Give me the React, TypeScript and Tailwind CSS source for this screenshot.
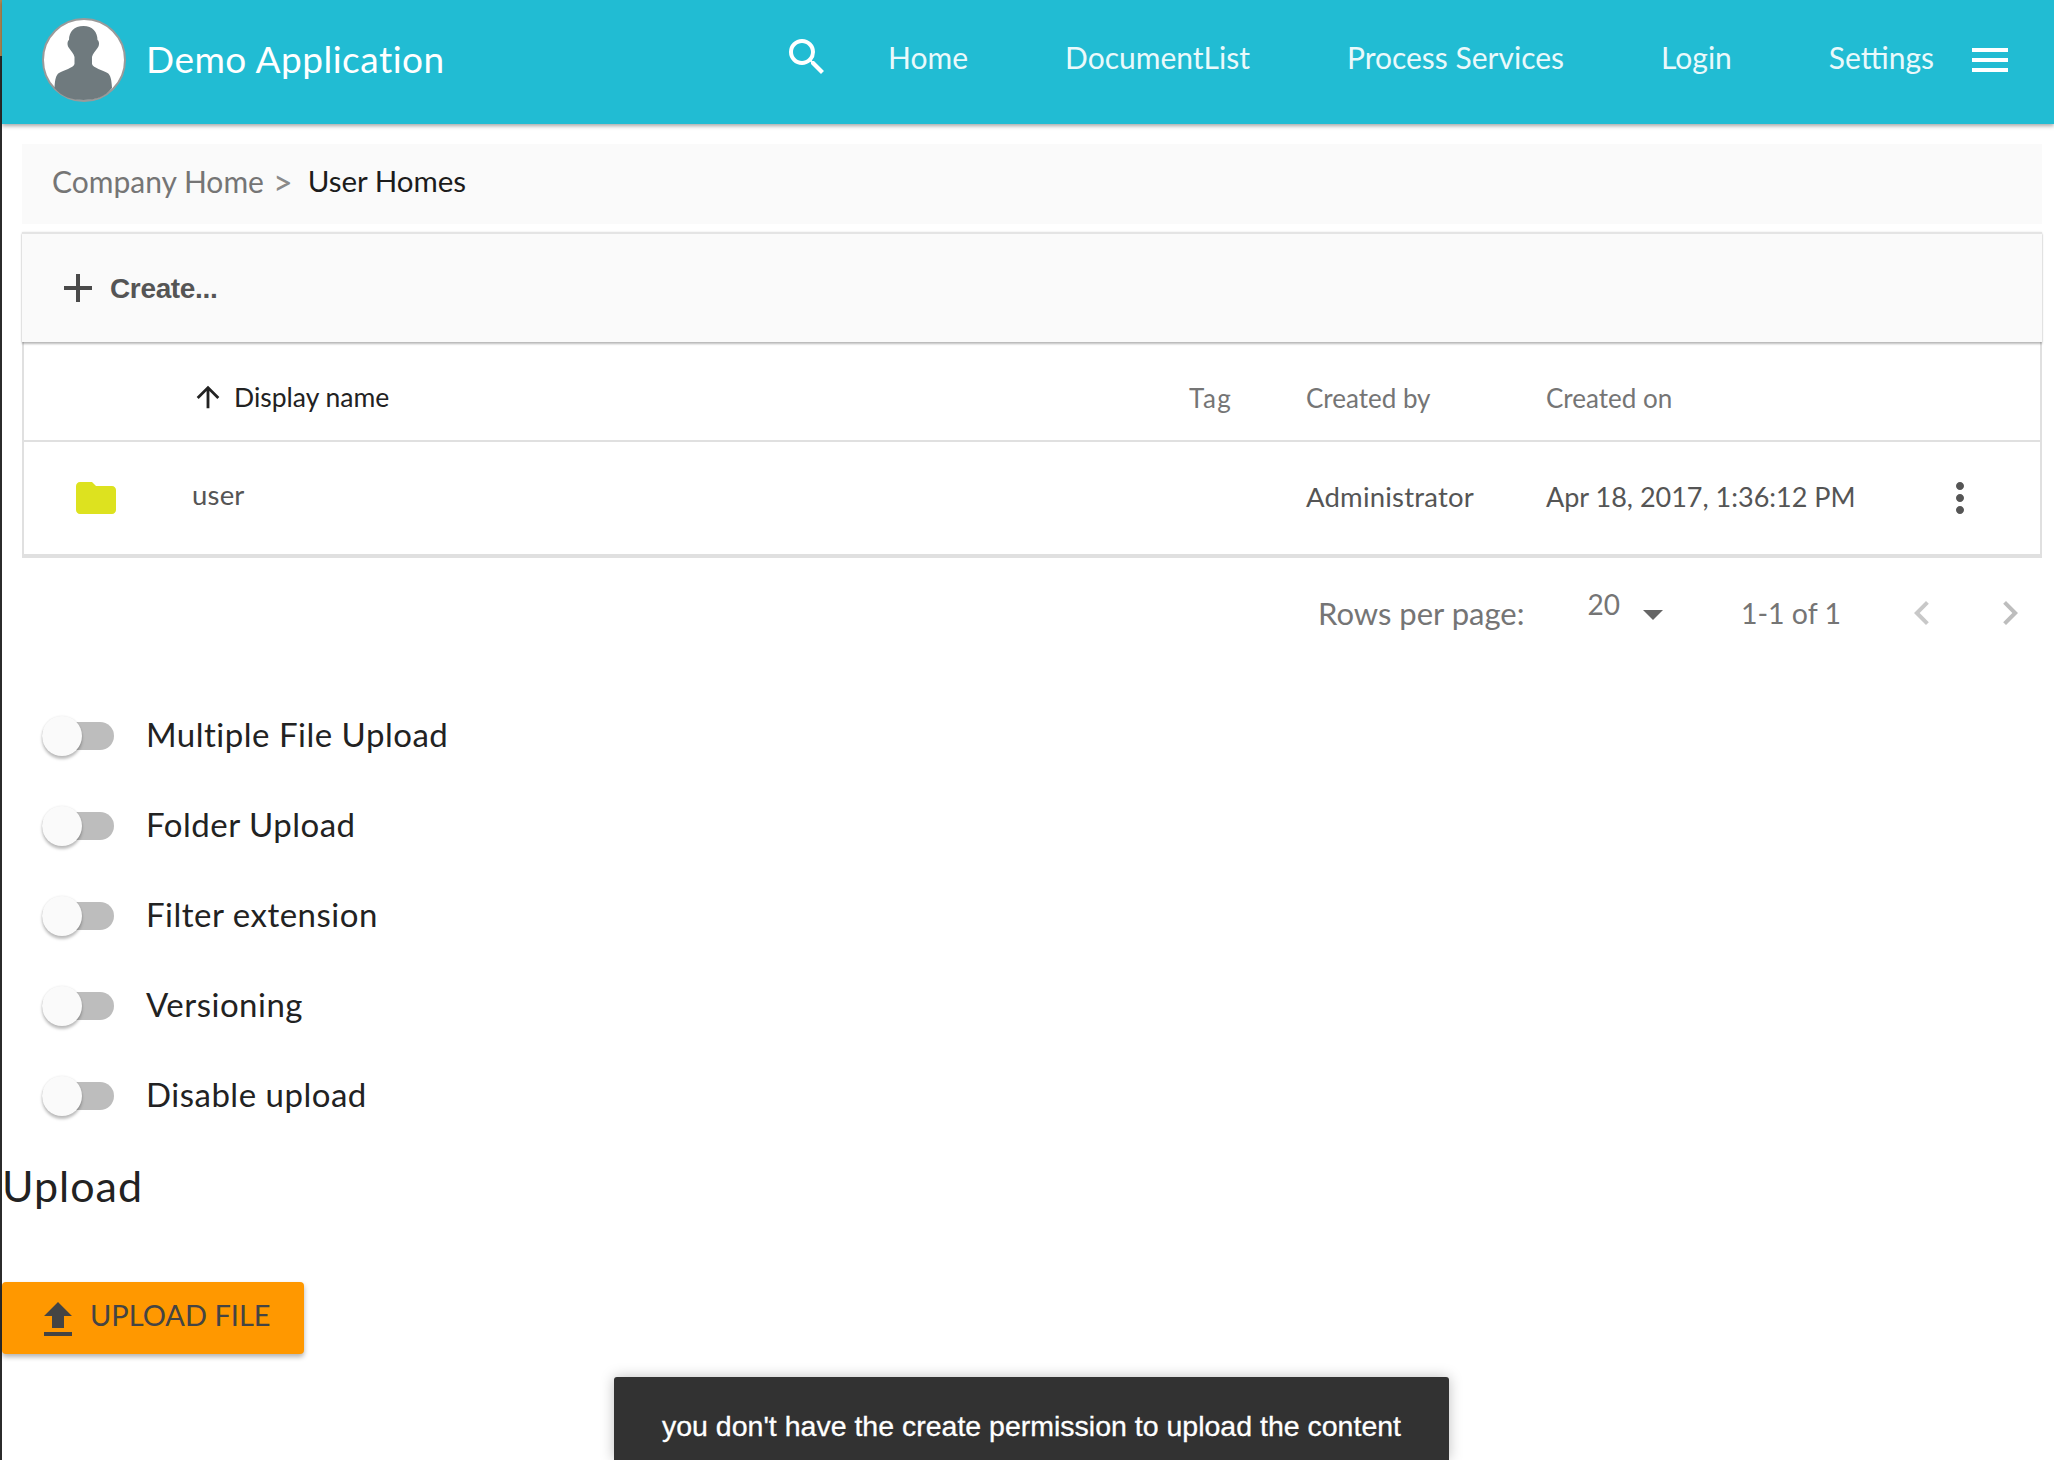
const muli = "font-['Lato',sans-serif]";

const Icon = ({ d, size = 48, className = '' }: { d: string; size?: number; className?: string }) => (
  <svg width={size} height={size} viewBox="0 0 24 24" fill="currentColor" className={`shrink-0 ${className}`}>
    <path d={d} />
  </svg>
);

const paths = {
  search: 'M15.5 14h-.79l-.28-.27A6.471 6.471 0 0 0 16 9.5 6.5 6.5 0 1 0 9.5 16c1.61 0 3.09-.59 4.23-1.57l.27.28v.79l5 4.99L20.49 19l-4.99-5zm-6 0C7.01 14 5 11.99 5 9.5S7.01 5 9.5 5 14 7.01 14 9.5 11.99 14 9.5 14z',
  menu: 'M3 18h18v-2H3v2zm0-5h18v-2H3v2zm0-7v2h18V6H3z',
  plus: 'M19 13h-6v6h-2v-6H5v-2h6V5h2v6h6v2z',
  arrowUp: 'M4 12l1.41 1.41L11 7.83V20h2V7.83l5.58 5.59L20 12l-8-8-8 8z',
  folder: 'M10 4H4c-1.1 0-1.99.9-1.99 2L2 18c0 1.1.9 2 2 2h16c1.1 0 2-.9 2-2V8c0-1.1-.9-2-2-2h-8l-2-2z',
  more: 'M12 8c1.1 0 2-.9 2-2s-.9-2-2-2-2 .9-2 2 .9 2 2 2zm0 2c-1.1 0-2 .9-2 2s.9 2 2 2 2-.9 2-2-.9-2-2-2zm0 6c-1.1 0-2 .9-2 2s.9 2 2 2 2-.9 2-2-.9-2-2-2z',
  left: 'M15.41 7.41L14 6l-6 6 6 6 1.41-1.41L10.83 12z',
  right: 'M10 6L8.59 7.41 13.17 12l-4.58 4.59L10 18l6-6z',
  upload: 'M9 16h6v-6h4l-7-7-7 7h4v6zm-4 2h14v2H5v-2z',
};

const navItems = ['Home', 'DocumentList', 'Process Services', 'Login', 'Settings'];
const toggles = ['Multiple File Upload', 'Folder Upload', 'Filter extension', 'Versioning', 'Disable upload'];

function Avatar() {
  return (
    <svg width="84" height="84" viewBox="0 0 84 84" className="-mt-[4px] shrink-0">
      <circle cx="42" cy="42" r="41" fill="#fff" stroke="#9a9a9a" strokeWidth="2" />
      <path
        fill="#6f7a7e"
        d="M41.5 8C32 8 27 14 27 22c-2 1-2 6 0 8 2 3 5 6 5.500 9v7c-1 4-11 6-15.500 9-3 2-4 6-4.500 15C20 79 30 82 41.500 82S63 79 70 70c-.5-9-1.500-13-4.500-15-4.500-3-14.500-5-15.500-9v-7c.5-3 3.500-6 5.500-9 2-2 2-7 0-8 0-8-5-14-14-14z"
      />
    </svg>
  );
}

function Toggle({ label }: { label: string }) {
  return (
    <div className="flex h-[90px] items-center">
      <div className="relative ml-[40px] h-[28px] w-[72px] rounded-full bg-[#bdbdbd]">
        <div className="absolute left-0 top-[-6px] h-[40px] w-[40px] rounded-full bg-[#fafafa] shadow-[0_3px_3px_rgba(0,0,0,0.25),0_0_2px_rgba(0,0,0,0.1)]" />
      </div>
      <span className="-mt-[3px] ml-[32px] text-[33px] leading-none tracking-[0.5px] text-[#222]">{label}</span>
    </div>
  );
}

export default function App() {
  return (
    <div className={`relative flex h-[1460px] overflow-hidden bg-white ${muli}`}>
      <aside className="w-[2px] shrink-0 bg-[#2b2b2b]">
        <div className="h-[56px] bg-[#b08a55]" />
      </aside>

      <main className="flex min-w-0 flex-1 flex-col">
        <header className="relative z-10 flex h-[124px] items-center bg-[#21bcd3] pl-[40px] pr-[40px] shadow-[0_2px_4px_rgba(0,0,0,0.35)]">
          <Avatar />
          <h1 className="-mt-[6px] ml-[20px] text-[37px] font-normal tracking-[0.5px] text-white">Demo Application</h1>
          <Icon d={paths.search} className="-mt-[10px] ml-auto text-white" />
          <nav className="-mt-[10px] ml-[57px] flex items-center gap-[97px] text-[30px] text-[#eaf9fb]">
            {navItems.map((item) => (
              <span key={item}>{item}</span>
            ))}
          </nav>
          <Icon d={paths.menu} className="-mt-[4px] ml-[32px] text-white" />
        </header>

        {/* Breadcrumb */}
        <div className="ml-[20px] mr-[12px] mt-[20px] flex h-[80px] items-center bg-[#fafafa] pb-[6px] pl-[30px] text-[30px]">
          <span className="text-[#757575]">Company Home</span>
          <span className="ml-[9px] text-[34px] text-[#8a8a8a]">&gt;</span>
          <span className="ml-[15px] text-[29.5px] text-[#1c1c1c]">User Homes</span>
        </div>

        {/* Toolbar */}
        <div className="relative z-[1] ml-[20px] mr-[12px] mt-[8px] flex h-[110px] items-center border-t-2 border-[#e4e4e4] bg-[#fafafa] pl-[32px] shadow-[0_2px_2px_rgba(0,0,0,0.26),0_0_2px_rgba(0,0,0,0.1)]">
          <Icon d={paths.plus} className="text-[#4a4a4a]" />
          <span className="ml-[8px] mt-[2px] font-['Liberation_Sans',sans-serif] text-[28px] font-semibold tracking-[-0.35px] text-[#555]">Create...</span>
        </div>

        {/* Document list */}
        <div className="ml-[20px] mr-[12px] border-x-2 border-b-4 border-[#e0e0e0]">
          <div className="grid h-[100px] grid-cols-[168px_997px_117px_240px_1fr] items-center border-b-2 border-[#e0e0e0] pt-[14px] text-[26px] text-[#757575]">
            <span />
            <span className="flex items-center text-[#222]">
              <Icon d={paths.arrowUp} size={34} className="-mt-[3px] -ml-[1px]" />
              <span className="ml-[9px] text-[26.5px]">Display name</span>
            </span>
            <span className="tracking-[1.5px]">Tag</span>
            <span>Created by</span>
            <span>Created on</span>
          </div>
          <div className="grid h-[112px] grid-cols-[168px_997px_117px_240px_1fr] items-center text-[27px] text-[#555]">
            <Icon d={paths.folder} className="ml-[48px] text-[#dde21f]" />
            <span className="-mt-[6px] text-[27.5px] tracking-[0.2px]">user</span>
            <span />
            <span className="-mt-[2px] text-[27.5px] tracking-[0.2px]">Administrator</span>
            <span className="flex items-center">
              <span className="-mt-[2px]">Apr 18, 2017, 1:36:12 PM</span>
              <Icon d={paths.more} className="ml-auto mr-[56px] text-[#555]" />
            </span>
          </div>
        </div>

        {/* Pagination */}
        <div className="flex h-[110px] items-center justify-end pr-[20px] text-[#757575]">
          <span className="text-[31px]">Rows per page:</span>
          <span className="-mt-[18px] ml-[63px] text-[28px]">20</span>
          <svg width="20" height="10" viewBox="0 0 20 10" className="ml-[23px] mt-[4px]">
            <path d="M0 0h20L10 10z" fill="#666" />
          </svg>
          <span className="ml-[78px] text-[28.5px]">1-1 of 1</span>
          <Icon d={paths.left} className="ml-[57px] text-[#c8c8c8]" />
          <Icon d={paths.right} className="ml-[40px] text-[#bdbdbd]" />
        </div>

        {/* Options */}
        <div className="mt-[23px]">
          {toggles.map((label) => (
            <Toggle key={label} label={label} />
          ))}
        </div>

        <h2 className="mt-[23px] text-[43px] font-normal leading-none tracking-[1px] text-[#222]">Upload</h2>

        <button className="mt-[75px] flex h-[72px] w-[302px] items-center rounded-[4px] bg-[#ff9800] pl-[32px] text-[29px] text-[#444] shadow-[0_3px_5px_rgba(0,0,0,0.3)]">
          <Icon d={paths.upload} className="mt-[4px]" />
          <span className="-mt-[6px] ml-[8px]">UPLOAD FILE</span>
        </button>
      </main>

      {/* Snackbar */}
      <div className="absolute bottom-0 left-[614px] h-[83px] w-[835px] rounded-t-[3px] bg-[#323232] pt-[32px] text-center font-['Liberation_Sans',sans-serif] text-[28.5px] leading-[34px] text-white shadow-[0_0_14px_rgba(0,0,0,0.25)] [-webkit-text-stroke:0.3px_#fff]">
        you don't have the create permission to upload the content
      </div>
    </div>
  );
}
